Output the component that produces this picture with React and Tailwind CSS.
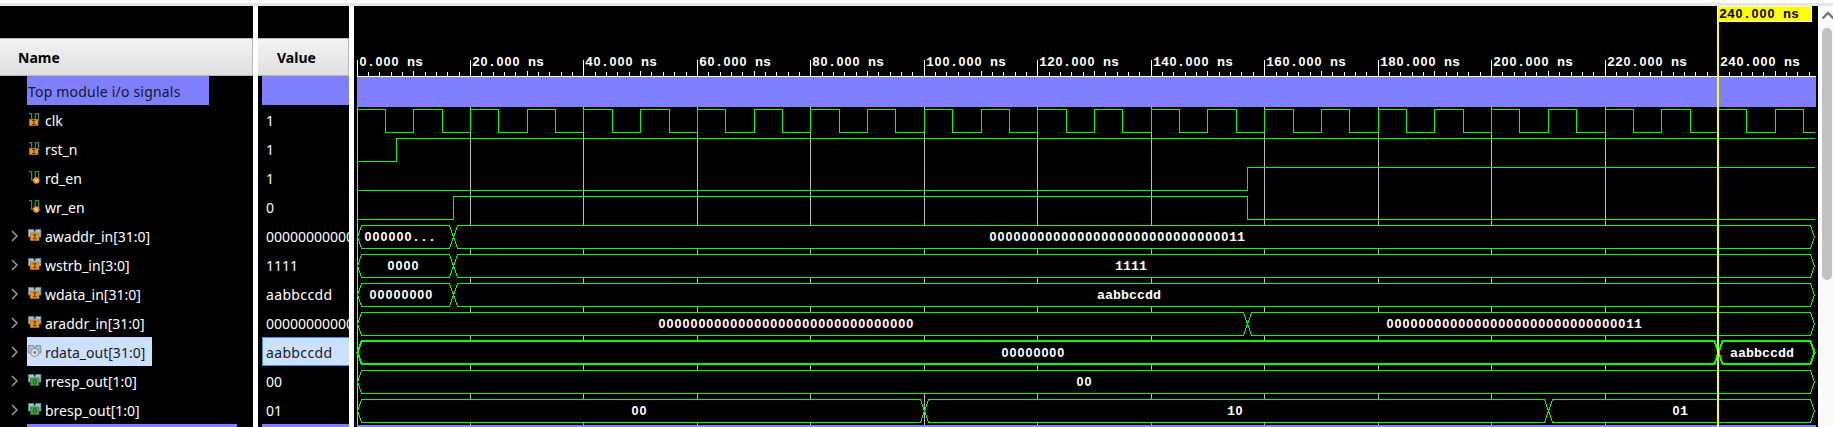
const ROW = 29;
const END = 1458;
const at = (t) => Math.floor(t * 5.673);

const signals = [
  { name: "clk", value: "1", kind: "scalar", port: "I" },
  { name: "rst_n", value: "1", kind: "scalar", port: "I" },
  { name: "rd_en", value: "1", kind: "scalar", port: "V" },
  { name: "wr_en", value: "0", kind: "scalar", port: "V" },
  { name: "awaddr_in[31:0]", value: "00000000000000000000000000000011", kind: "bus", port: "I" },
  { name: "wstrb_in[3:0]", value: "1111", kind: "bus", port: "I" },
  { name: "wdata_in[31:0]", value: "aabbccdd", kind: "bus", port: "I" },
  { name: "araddr_in[31:0]", value: "00000000000000000000000000000011", kind: "bus", port: "I" },
  { name: "rdata_out[31:0]", value: "aabbccdd", kind: "bus", port: "R", selected: true },
  { name: "rresp_out[1:0]", value: "00", kind: "bus", port: "O" },
  { name: "bresp_out[1:0]", value: "01", kind: "bus", port: "O" },
];

// [text, centre x] labels, one list for each bus, with its transition times
const buses = [
  { row: 4, cuts: [17], labels: [["000000...", 43], ["00000000000000000000000000000011", 760]] },
  { row: 5, cuts: [17], labels: [["0000", 46], ["1111", 774]] },
  { row: 6, cuts: [17], labels: [["00000000", 44], ["aabbccdd", 772]] },
  { row: 7, cuts: [157], labels: [["00000000000000000000000000000000", 429], ["00000000000000000000000000000011", 1157]] },
  { row: 8, cuts: [240], bold: true, labels: [["00000000", 676], ["aabbccdd", 1405]] },
  { row: 9, cuts: [], labels: [["00", 727]] },
  { row: 10, cuts: [100, 210], labels: [["00", 282], ["10", 878], ["01", 1323]] },
];

function SignalIcon({ kind, port }) {
  const fill = port === "O" ? "#3fa344" : "#f2921d";
  return (
    <svg width="14" height="13" viewBox="0 0 14 13" className="shrink-0">
      {kind === "scalar" ? (
        <path d="M1 .7h2.6v8.3h2M7.4 8V.7h3.2V8" fill="none" stroke="#2e8f45" strokeWidth="1.3" />
      ) : (
        <path d="M.5 .5h5l1.2 3 1.2-3h5v7.5h-12.4z" fill="#9cc4d4" stroke="#6d8791" strokeWidth=".8" />
      )}
      {port === "V" && (
        <>
          <circle cx="8.3" cy="9.5" r="3.2" fill={fill} />
          <path d="M7 8.3l1.3 2.5 1.3-2.5" fill="none" stroke="#fff" strokeWidth=".9" />
        </>
      )}
      {port === "R" && (
        <>
          <circle cx="6.7" cy="7.5" r="4" fill="#e4e4e4" stroke="#8a8f94" strokeWidth="1" />
          <circle cx="6.7" cy="7.5" r="1.4" fill="#777" />
        </>
      )}
      {(port === "I" || port === "O") && (
        <g transform={kind === "scalar" ? "translate(-1 1.8)" : undefined}>
          <rect x="2.4" y={kind === "scalar" ? 4.5 : 4} width="8.6" height={kind === "scalar" ? 6.3 : 7.5} fill={fill} stroke={port === "O" ? "#2c7d33" : "#b8762a"} strokeWidth=".7" />
          {port === "I" ? (
            <path d="M4.9 5.7h3.8M4.9 9.7h3.8M6.8 5.7v4" stroke="#4a4036" strokeWidth="1.1" />
          ) : (
            <rect x="5.3" y="5.7" width="2.8" height="4.2" rx="1" fill="none" stroke="#234f27" />
          )}
        </g>
      )}
    </svg>
  );
}

// The mono face marks its zeros, so zeros are set in a plain bold face on the same 8px pitch.
function Mono({ x, y, children, fill = "#fff", center }) {
  const start = center ? x - children.length * 4 : x;
  const runs = children.match(/0+|[^0]+/g);
  let i = 0;
  return (
    <text y={y} fill={fill} fontSize="13.33" fontWeight="700" xmlSpace="preserve" fontFamily="'Liberation Mono', monospace">
      {runs.map((r, k) => {
        const px = start + i * 8;
        i += r.length;
        return r[0] === "0" ? (
          <tspan key={k} x={px + 0.4} fontFamily="'Liberation Sans', sans-serif" fontSize="12.6" letterSpacing="0.993">{r}</tspan>
        ) : (
          <tspan key={k} x={px}>{r}</tspan>
        );
      })}
    </text>
  );
}

function Scalar({ row, points }) {
  const hi = 103.5 + row * ROW;
  const lo = hi + 23;
  let d = `M0 ${points[0][1] ? hi : lo}`;
  points.slice(1).forEach(([t, v]) => {
    d += `H${at(t) + 0.5}V${v ? hi : lo}`;
  });
  return <path d={d + `H${END}`} fill="none" stroke="#00ff00" />;
}

function Bus({ row, cuts, bold, labels }) {
  const hi = (bold ? 103 : 103.5) + row * ROW;
  const lo = hi + 23;
  const mid = hi + 11.5;
  const edges = [0.5, ...cuts.map((t) => at(t) + 0.5), END - 0.5];
  return (
    <g>
      {edges.slice(1).map((e, i) => (
        <path
          key={e}
          d={`M${edges[i]} ${mid}L${edges[i] + 4} ${hi}H${e - 4}L${e} ${mid}L${e - 4} ${lo}H${edges[i] + 4}Z`}
          fill="#000"
          stroke="#00ff00"
          strokeWidth={bold ? 2 : 1}
        />
      ))}
      {labels.map(([text, x]) => (
        <Mono key={x} x={x} y={119 + row * ROW} center>{text}</Mono>
      ))}
    </g>
  );
}

function Waves() {
  const ticks = Array.from({ length: 129 }, (_, i) => i * 2);
  const clock = Array.from({ length: 52 }, (_, i) => [i * 5, i % 2 === 0]);
  const majors = Array.from({ length: 13 }, (_, i) => i * 20);
  return (
    <svg width="1464" height="421" viewBox="-3 0 1464 421" shapeRendering="crispEdges" className="block">
      {ticks.map((t) => {
        const top = t % 20 === 0 ? 54 : t % 10 === 0 ? 65 : 66;
        return <rect key={t} x={at(t)} y={top} width="1" height={70 - top} fill="#fff" />;
      })}
      {majors.map((t) => (
        <g key={t}>
          <rect x={at(t)} y="101" width="1" height="320" fill="#b9b9b9" />
          <Mono x={at(t) + 2} y={60}>{`${t}.000 ns`}</Mono>
        </g>
      ))}
      <rect x="0" y="70" width="1459" height="1" fill="#fff" />
      <rect x="0" y="71" width="1459" height="30" fill="#8080ff" />
      <Scalar row={0} points={clock} />
      <Scalar row={1} points={[[0, 0], [7, 1]]} />
      <Scalar row={2} points={[[0, 0], [157, 1]]} />
      <Scalar row={3} points={[[0, 0], [17, 1], [157, 0]]} />
      {buses.map((b) => <Bus key={b.row} {...b} />)}
      <rect x="0" y="419" width="1459" height="2" fill="#8080ff" />
      <rect x="1360" y="0" width="2" height="421" fill="#ffff00" />
      <rect x="1360.5" y="0.5" width="94" height="15" fill="#ffff00" stroke="#ffffc8" />
      <Mono x={1362} y={12} fill="#000">240.000 ns</Mono>
    </svg>
  );
}

const header = "h-[38px] shrink-0 border-y border-r border-[#b8b8b8] bg-linear-to-b from-[#f3f3f3] to-[#dfdfe0] text-[14px] font-bold leading-[37px] text-black";

export default function App() {
  return (
    <div className="flex h-[427px] w-[1833px] flex-col overflow-hidden bg-white font-['Noto_Sans','Open_Sans',sans-serif] text-[14px] text-white">
      <div className="mt-[3px] h-[3px] shrink-0 bg-[#e6e6e6]" />
      <div className="flex h-[421px]">
        <div className="flex w-[253px] flex-col overflow-hidden bg-black pt-8">
          <div className={`${header} pl-[18px]`}>Name</div>
          <div className="ml-[27px] h-[29px] w-[182px] shrink-0 bg-[#8080ff] pl-px leading-[31px] tracking-[0.2px] whitespace-nowrap text-[#15152a]">Top module i/o signals</div>
          {signals.map((s) => (
            <div key={s.name} className="flex h-[29px] shrink-0 items-center">
              <div className="flex w-[27px] justify-end pr-[9px]">
                {s.kind === "bus" && (
                  <svg width="7" height="12" viewBox="0 0 7 12">
                    <path d="M1 1l5 5-5 5" fill="none" stroke="#9a9a9a" strokeWidth="1.5" />
                  </svg>
                )}
              </div>
              <div className={`flex h-full items-center gap-[3px] pr-2 pl-px ${s.selected ? "w-[125px] bg-[#cce0ff] text-[#1b1b1b]" : ""}`}>
                <SignalIcon kind={s.kind} port={s.port} />
                <span className="h-[29px] leading-[31px] whitespace-nowrap">{s.name}</span>
              </div>
            </div>
          ))}
          <div className="ml-[27px] h-[29px] w-[210px] shrink-0 bg-[#8080ff]" />
        </div>
        <div className="ml-[5px] flex w-[91px] flex-col overflow-hidden bg-black pt-8">
          <div className={`${header} pl-[19px]`}>Value</div>
          <div className="ml-1 h-[29px] shrink-0 bg-[#8080ff]" />
          {signals.map((s) => (
            <div
              key={s.name}
              className={`ml-1 h-[29px] shrink-0 overflow-hidden whitespace-nowrap ${s.value === "aabbccdd" ? "tracking-[0.35px]" : ""} ${s.selected ? "border-y border-l border-[#3a94dc] bg-[#cce0ff] pl-[3px] leading-[29px] text-[#1b1b1b]" : "pl-1 leading-[31px]"}`}
            >
              {s.value}
            </div>
          ))}
          <div className="ml-1 h-[29px] shrink-0 bg-[#8080ff]" />
        </div>
        <div className="ml-[5px] w-[1464px] overflow-hidden bg-black"><Waves /></div>
        <div className="flex w-[15px] flex-col items-center overflow-hidden bg-[#fafafa]">
          <svg width="13" height="22" viewBox="0 0 13 22" className="ml-1 shrink-0">
            <path d="M1.5 12.5l5.5-5.5 5.5 5.5" fill="none" stroke="#777" strokeWidth="2.3" />
          </svg>
          <div className="ml-[3px] h-[252px] w-[10px] shrink-0 rounded-full bg-[#c1c1c1]" />
        </div>
      </div>
    </div>
  );
}
